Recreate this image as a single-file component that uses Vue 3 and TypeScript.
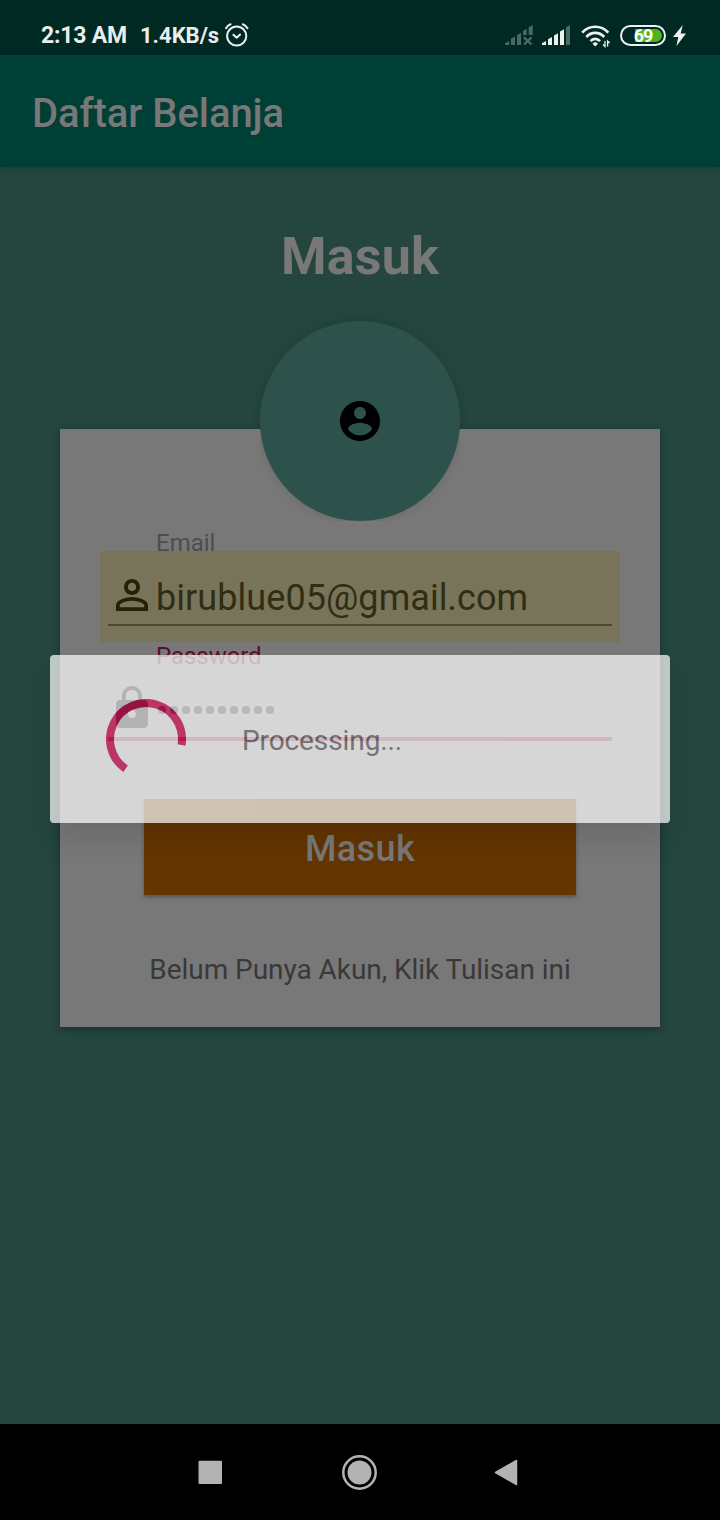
<script setup lang="ts">
const appTitle = 'Daftar Belanja'
const email = 'birublue05@gmail.com'
const passwordLength = 10
const bars = [
  { x: 0, y: 16 },
  { x: 6, y: 12 },
  { x: 12, y: 8.3 },
  { x: 18, y: 4.2 },
  { x: 24, y: 0 },
]
</script>

<template>
  <div class="screen">
    <header class="status">
      <span class="clock">2:13 AM</span>
      <span class="speed">1.4KB/s</span>
      <svg class="alarm" width="26" height="26" viewBox="0 0 26 26" fill="none" stroke="currentColor" stroke-width="2" stroke-linecap="round" stroke-linejoin="round">
        <circle cx="12.700" cy="14" r="9.600" />
        <path d="M9.400 12.700l3.300 3.100 3.400-3.200" />
        <path d="M2 6.200Q3.600 3.300 6.600 2.200M18.800 2.200Q21.800 3.300 23.500 6.200" />
      </svg>
      <svg class="signal" width="28" height="22" viewBox="0 0 28 22">
        <g fill="#4b6963">
          <path d="M0 20v-1.500L4.200 16v4z" />
          <path d="M6 13.800l4-2.300V20H6zM12 10l4-2.300V20h-4z" />
          <path d="M18 6l3.700-2.300V10H18zM23.700 2.200l4-2.200v10h-4z" />
        </g>
        <path d="M19 12.300l7.500 7.200M26.500 12.300l-7.500 7.200" stroke="#4b6963" stroke-width="2.400" />
      </svg>
      <svg class="signal second" width="28" height="22" viewBox="0 0 28 22">
        <path
          v-for="(bar, i) in bars"
          :key="bar.x"
          :d="`M${bar.x} ${bar.y + 2.2}l4-2.200V20h-4z`"
          :fill="i === 4 ? '#4b6963' : '#edf1f0'"
        />
      </svg>
      <svg class="wifi" width="30" height="24" viewBox="0 0 30 24">
        <g fill="none" stroke="#edf1f0" stroke-width="2.700">
          <path d="M1.200 8.600C8.500 0.800 20 0.800 27.300 8.600" />
          <path d="M5.300 13C10.300 7.600 18.200 7.600 23.200 13" />
          <path d="M9.500 17.200C12.200 14.200 16.300 14.200 19 17.200" />
        </g>
        <path d="M14.250 22.500L11.500 19.700Q14.250 16.800 17 19.700Z" fill="#edf1f0" />
        <path d="M24 17v5.500l-2-2M26.600 22.500v-5.500l2 2" fill="none" stroke="#edf1f0" stroke-width="1.300" />
      </svg>
      <span class="battery"><span class="charge"></span><span class="percent">69</span></span>
      <svg class="bolt" width="13" height="21" viewBox="0 0 13 21" fill="#edf1f0">
        <path d="M9.800 0L0 12h5.200L3.500 21 13 8.500H7.700z" />
      </svg>
    </header>

    <div class="appbar"><h1>{{ appTitle }}</h1></div>

    <main class="content">
      <h2 class="title">Masuk</h2>
      <div class="avatar">
        <svg width="48" height="48" viewBox="0 0 24 24">
          <path d="M12 2C6.480 2 2 6.480 2 12s4.480 10 10 10 10-4.480 10-10S17.520 2 12 2zm0 3c1.660 0 3 1.340 3 3s-1.340 3-3 3-3-1.340-3-3 1.340-3 3-3zm0 14.200c-2.500 0-4.710-1.280-6-3.220.03-1.990 4-3.080 6-3.080 1.990 0 5.970 1.090 6 3.080-1.290 1.940-3.500 3.220-6 3.220z" />
        </svg>
      </div>
      <section class="card">
        <label class="label">Email</label>
        <div class="field filled">
          <svg width="48" height="48" viewBox="0 0 24 24" fill="#24210a">
            <path d="M12 5.900c1.160 0 2.100.94 2.100 2.100s-.94 2.100-2.100 2.100S9.900 9.160 9.900 8s.94-2.100 2.100-2.100m0 9c2.970 0 6.100 1.460 6.100 2.100v1.100H5.900V17c0-.64 3.130-2.100 6.100-2.100M12 4C9.790 4 8 5.790 8 8s1.790 4 4 4 4-1.790 4-4-1.790-4-4-4zm0 9c-2.670 0-8 1.340-8 4v3h16v-3c0-2.660-5.330-4-8-4z" />
          </svg>
          <span class="value">{{ email }}</span>
        </div>
        <label class="label active">Password</label>
        <div class="field focused">
          <svg width="48" height="48" viewBox="0 0 24 24">
            <path d="M18 8h-1V6c0-2.760-2.240-5-5-5S7 3.240 7 6v2H6c-1.100 0-2 .9-2 2v10c0 1.100.9 2 2 2h12c1.100 0 2-.9 2-2V10c0-1.100-.9-2-2-2zm-6 9c-1.100 0-2-.9-2-2s.9-2 2-2 2 .9 2 2-.9 2-2 2zm3.100-9H8.900V6c0-1.710 1.390-3.100 3.100-3.100 1.710 0 3.100 1.390 3.100 3.100v2z" />
          </svg>
          <span class="dots"><i v-for="n in passwordLength" :key="n"></i></span>
        </div>
        <button class="submit" type="button">Masuk</button>
        <p class="register">Belum Punya Akun, Klik Tulisan ini</p>
      </section>
    </main>

    <nav class="navbar">
      <svg width="720" height="96" viewBox="0 0 720 96" fill="#b3b3b3">
        <rect x="198.500" y="36.700" width="23.500" height="23.300" rx="1" />
        <circle cx="359.500" cy="48.500" r="12" />
        <circle cx="359.500" cy="48.500" r="16.200" fill="none" stroke="#b3b3b3" stroke-width="2.500" />
        <path d="M495.500 48.500L516.500 36.500V60.500Z" stroke="#b3b3b3" stroke-width="1.500" stroke-linejoin="round" />
      </svg>
    </nav>

    <div class="dialog-shadow"></div>
    <div class="dialog" role="dialog">
      <svg class="spinner" width="80" height="80" viewBox="0 0 80 80">
        <path d="M19.600 69.700A36 36 0 1 1 75.500 46" fill="none" stroke="#d81b60" stroke-width="8" />
      </svg>
      <span class="message">Processing...</span>
    </div>
  </div>
</template>

<style>
body {
  background: #24463f;
}
</style>

<style scoped>
.screen {
  position: relative;
  width: 720px;
  height: 1520px;
  overflow: hidden;
  display: flex;
  flex-direction: column;
  background: #24463f;
  font-family: Roboto, "Liberation Sans", sans-serif;
}
.status {
  height: 55px;
  box-sizing: border-box;
  padding: 15px 32px 0 41px;
  display: flex;
  align-items: center;
  background: #002924;
  color: #e9eeed;
  font-size: 23px;
  font-weight: 700;
}
.clock {
  width: 99px;
  margin-top: 1px;
  letter-spacing: -0.2px;
  white-space: nowrap;
}
.speed {
  width: 84px;
  margin-top: 1px;
  font-size: 22px;
  white-space: nowrap;
}
.alarm {
  margin-top: -1px;
}
.signal {
  margin-top: 1px;
  margin-left: 255px;
}
.signal.second {
  margin-left: 9px;
}
.wifi {
  margin-top: 1px;
  margin-left: 11px;
}
.battery {
  position: relative;
  width: 46px;
  height: 21px;
  margin-left: 9px;
  box-sizing: border-box;
  border: 2px solid #edf1f0;
  border-radius: 11px;
  display: flex;
  align-items: center;
  justify-content: center;
}
.charge {
  position: absolute;
  left: 13px;
  top: 2px;
  width: 27px;
  height: 13px;
  border-radius: 0 7px 7px 0;
  background: #4fb41c;
}
.percent {
  position: relative;
  font-size: 18px;
  line-height: 17px;
  letter-spacing: -1.2px;
  color: #fff;
}
.bolt {
  margin-left: 7px;
}
.appbar {
  position: relative;
  height: 112px;
  padding-left: 32px;
  display: flex;
  align-items: center;
  background: #003f36;
  box-shadow: 0 1px 5px rgba(0, 0, 0, 0.22);
}
h1 {
  margin: 5px 0 0;
  font-size: 40px;
  font-weight: 500;
  letter-spacing: -0.07px;
  color: #787878;
}
.content {
  flex: 1;
  display: flex;
  flex-direction: column;
  align-items: center;
}
.title {
  margin: 55px 0 0;
  height: 69px;
  line-height: 70px;
  font-size: 52px;
  font-weight: 700;
  letter-spacing: 0.2px;
  color: #787878;
}
.avatar {
  position: relative;
  z-index: 1;
  width: 200px;
  height: 200px;
  margin-top: 30px;
  border-radius: 50%;
  background: #2c524b;
  display: flex;
  align-items: center;
  justify-content: center;
  box-shadow: 0 0 12px rgba(0, 0, 0, 0.13);
  clip-path: polygon(-20px -20px, 220px -20px, 220px 108px, 200px 108px, 200px 200px, 0 200px, 0 108px, -20px 108px);
}
.card {
  width: 600px;
  height: 598px;
  margin-top: -92px;
  box-sizing: border-box;
  padding: 99px 40px 0;
  display: flex;
  flex-direction: column;
  background: #787878;
  box-shadow: 0 2px 7px rgba(0, 0, 0, 0.35);
}
.label {
  height: 23px;
  padding-left: 56px;
  line-height: 30px;
  font-size: 24px;
  color: #4d4d4d;
}
.field {
  position: relative;
  height: 91px;
  box-sizing: border-box;
  padding: 0 8px;
  display: flex;
  align-items: center;
}
.field::after {
  content: "";
  position: absolute;
  left: 8px;
  right: 8px;
}
.filled {
  background: #78745a;
}
.filled svg {
  margin-top: -3px;
}
.filled::after {
  top: 73px;
  height: 2px;
  background: #4a472b;
}
.value {
  margin-top: 2px;
  font-size: 36px;
  letter-spacing: 0.06px;
  color: #302d13;
}
.label.active {
  line-height: 28px;
  letter-spacing: -0.05px;
  color: #5f0b2a;
}
.focused {
  height: 134px;
  align-items: flex-start;
  padding-top: 19px;
}
.focused::after {
  top: 72px;
  height: 4px;
  background: #650d2d;
}
.dots {
  margin-top: 22px;
  padding-left: 2px;
  display: flex;
  gap: 4.5px;
}
.dots i {
  width: 7.5px;
  height: 7.5px;
  border-radius: 50%;
  background: #101010;
}
.submit {
  width: 432px;
  height: 96px;
  align-self: center;
  flex: none;
  padding: 4px 0 0;
  border: 0;
  background: #633500;
  box-shadow: 0 2px 4px rgba(0, 0, 0, 0.3);
  font-family: inherit;
  font-size: 36px;
  font-weight: 500;
  letter-spacing: 0.4px;
  color: #787878;
}
.register {
  margin: 58px 0 0;
  text-align: center;
  line-height: 33px;
  font-size: 28px;
  letter-spacing: -0.05px;
  color: #393939;
}
.navbar {
  height: 96px;
  background: #000;
}
.navbar svg {
  display: block;
}
.dialog,
.dialog-shadow {
  position: absolute;
  left: 50px;
  top: 655px;
  width: 620px;
  height: 168px;
  box-sizing: border-box;
  border-radius: 4px;
}
.dialog-shadow {
  box-shadow: 0 14px 32px rgba(0, 0, 0, 0.12);
  clip-path: polygon(-50px 0, 0 0, 0 100%, 100% 100%, 100% 0, 670px 0, 670px 240px, -50px 240px);
}
.dialog {
  padding-left: 56px;
  display: flex;
  align-items: center;
  background: #fff;
  opacity: 0.7;
}
.message {
  margin: 3px 0 0 56px;
  font-size: 28px;
  letter-spacing: -0.1px;
  color: #737373;
}
</style>
